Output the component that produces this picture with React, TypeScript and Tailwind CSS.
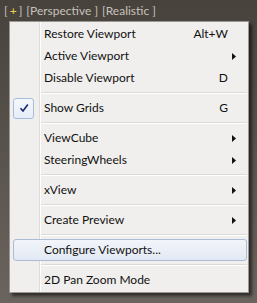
import React from 'react';

type Item =
  | { kind: 'item'; label: string; shortcut?: string; submenu?: boolean; checked?: boolean; hover?: boolean }
  | { kind: 'sep' };

const items: Item[] = [
  { kind: 'item', label: 'Restore Viewport', shortcut: 'Alt+W' },
  { kind: 'item', label: 'Active Viewport', submenu: true },
  { kind: 'item', label: 'Disable Viewport', shortcut: 'D' },
  { kind: 'sep' },
  { kind: 'item', label: 'Show Grids', shortcut: 'G', checked: true },
  { kind: 'sep' },
  { kind: 'item', label: 'ViewCube', submenu: true },
  { kind: 'item', label: 'SteeringWheels', submenu: true },
  { kind: 'sep' },
  { kind: 'item', label: 'xView', submenu: true },
  { kind: 'sep' },
  { kind: 'item', label: 'Create Preview', submenu: true },
  { kind: 'sep' },
  { kind: 'item', label: 'Configure Viewports...', hover: true },
  { kind: 'sep' },
  { kind: 'item', label: '2D Pan Zoom Mode' },
];

function Arrow() {
  return (
    <svg width="4" height="7" viewBox="0 0 4 7">
      <path d="M0 0 L4 3.5 L0 7 Z" fill="#111" />
    </svg>
  );
}

function Check() {
  return (
    <div className="w-[21px] h-[21px] rounded-[3px] border border-[#a6bcdb] bg-gradient-to-b from-[#f4f8fd] to-[#e6eef9] flex items-center justify-center">
      <svg width="10" height="10" viewBox="0 0 10 10">
        <path d="M1.5 5.2 L4 8 L8.8 1.5" stroke="#1c2470" strokeWidth="1.6" fill="none" />
      </svg>
    </div>
  );
}

// trailing part shared by normal + hovered rows
function Tail({ shortcut, submenu }: { shortcut?: string; submenu?: boolean }) {
  return (
    <>
      {shortcut && <span className="ml-auto">{shortcut}</span>}
      <div className={'w-[19px] shrink-0 flex items-center pl-[4px] ' + (shortcut ? '' : 'ml-auto')}>
        {submenu && <Arrow />}
      </div>
    </>
  );
}

function GutterLine() {
  return (
    <div className="h-[1px] flex">
      <div className="w-[30px] border-r border-[#dedcda]" />
      <div className="border-l border-white" />
    </div>
  );
}

export default function App() {
  return (
    <div className="w-[257px] h-[303px] overflow-hidden bg-gradient-to-b from-[#48423d] to-[#6b645e] font-['Lato','Noto_Sans',sans-serif] text-[12px]">
      <div className="h-[21px] pl-[4px] pt-[3px] flex items-start gap-[4px] text-[#c6c2bd] leading-[15px] whitespace-pre">
        <span>
          [<span className="mx-[2px] text-[#e6d44a]">+</span>]
        </span>
        <span>[Perspective ]</span>
        <span>[Realistic ]</span>
      </div>

      <div className="ml-[9px] w-[240px] border border-[#9a9794] bg-[#f0efed] flex flex-col shadow-[3px_3px_3px_rgba(0,0,0,0.55)]">
        <GutterLine />
        {items.map((it, i) => {
          if (it.kind === 'sep') {
            return (
              <div key={i} className="h-[8px] flex">
                <div className="w-[30px] shrink-0 border-r border-[#dedcda]" />
                <div className="flex-1 mr-[1px] flex flex-col justify-center border-l border-white">
                  <div className="h-px bg-[#dcdad8]" />
                  <div className="h-px bg-white" />
                </div>
              </div>
            );
          }
          if (it.hover) {
            return (
              <div
                key={i}
                className="h-[22px] ml-[3px] mr-[1px] flex items-center pl-[30px] rounded-[3px] border border-[#aabcd6] bg-gradient-to-b from-[#f2f5fa] to-[#e3e9f3] text-[#111]"
              >
                <span>{it.label}</span>
                <Tail shortcut={it.shortcut} submenu={it.submenu} />
              </div>
            );
          }
          return (
            <div key={i} className="h-[22px] flex text-[#111]">
              <div className="w-[30px] shrink-0 border-r border-[#dedcda] pl-[3px] flex items-center">
                {it.checked && <Check />}
              </div>
              <div className="flex-1 mr-[1px] pl-[3px] flex items-center border-l border-white">
                <span>{it.label}</span>
                <Tail shortcut={it.shortcut} submenu={it.submenu} />
              </div>
            </div>
          );
        })}
        <GutterLine />
      </div>
    </div>
  );
}
